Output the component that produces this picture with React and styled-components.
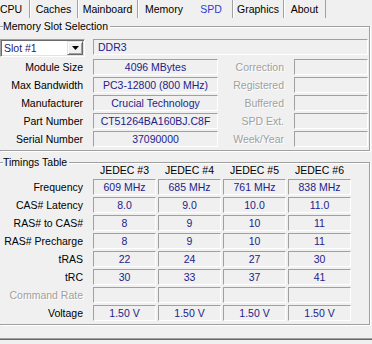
import React from 'react';
import styled, { createGlobalStyle } from 'styled-components';

const Global = createGlobalStyle`
  html, body { margin: 0; padding: 0; background: #f0f0f0; }
  body {
    font-family: "Liberation Sans", Arial, sans-serif;
    font-size: 10.5px;
    color: #000;
  }
  * { box-sizing: border-box; }
`;

const Window = styled.div`
  width: 372px;
  height: 344px;
  overflow: hidden;
  background: #f0f0f0;
`;

const TabBar = styled.div`
  display: flex;
  height: 18px;
  margin-left: -8px;
`;

const Tab = styled.div`
  width: ${(p) => p.$w}px;
  height: 18px;
  line-height: 18px;
  text-align: center;
  white-space: nowrap;
  color: ${(p) => (p.$active ? '#2a3bd6' : '#000')};
  border-left: ${(p) => (p.$active ? 'none' : '1px solid #a0a0a0')};
  box-shadow: ${(p) => (p.$active ? 'none' : 'inset 1px 0 #fff')};
  border-right: ${(p) => (p.$last ? '1px solid #a0a0a0' : 'none')};
`;

const Page = styled.div`
  height: 322px;
  padding-top: 8px;
  border-bottom: 1px solid #696969;
  box-shadow: inset 0 -1px #a0a0a0;
`;

const Group = styled.div`
  position: relative;
  width: 370px;
  margin-top: ${(p) => p.$mt || 0}px;
  padding: ${(p) => p.$pad};
  border: 1px solid #a0a0a0;
  border-left: none;
  box-shadow: inset 0 1px #fff, 1px 1px 0 #fff;
`;

const GroupTitle = styled.div`
  position: absolute;
  top: -7px;
  left: 3px;
  padding-right: 2px;
  line-height: 13px;
  background: #f0f0f0;
  white-space: nowrap;
`;

const SlotGrid = styled.div`
  display: grid;
  grid-template-columns: 93px 125px 76px 74px;
  grid-template-rows: 18px repeat(5, 16px);
  row-gap: 2px;
`;

const TimingGrid = styled.div`
  display: grid;
  grid-template-columns: 91px repeat(4, 63px);
  grid-template-rows: 13px repeat(8, 16px);
  column-gap: 2px;
  row-gap: 2px;
`;

const Label = styled.div`
  text-align: right;
  padding-right: ${(p) => p.$pr || 10}px;
  line-height: 16px;
  white-space: nowrap;
  color: ${(p) => (p.$disabled ? '#a0a0a0' : '#000')};
  text-shadow: ${(p) => (p.$disabled ? '1px 1px 0 #fff' : 'none')};
`;

const Head = styled.div`
  text-align: center;
  line-height: 13px;
  white-space: nowrap;
`;

const Field = styled.div`
  height: 16px;
  line-height: 14px;
  border: 1px solid;
  border-color: #a0a0a0 #fff #fff #a0a0a0;
  color: #22228a;
  white-space: nowrap;
  overflow: hidden;
  text-align: ${(p) => (p.$left ? 'left' : 'center')};
  padding-left: ${(p) => (p.$left ? 4 : 0)}px;
  grid-column: ${(p) => p.$span || 'auto'};
`;

const Combo = styled.div`
  width: 85px;
  height: 18px;
  display: flex;
  align-items: stretch;
  background: #fff;
  border: 1px solid;
  border-color: #a0a0a0 #fff #fff #a0a0a0;
  box-shadow: inset 1px 1px #696969, inset -1px -1px #e3e3e3;
  padding: 1px;
`;

const ComboText = styled.div`
  flex: 1;
  line-height: 14px;
  padding-left: 2px;
  color: #1a1a70;
`;

const ComboButton = styled.div`
  width: 16px;
  display: flex;
  align-items: center;
  justify-content: center;
  background: #f0f0f0;
  border: 1px solid;
  border-color: #e3e3e3 #696969 #696969 #e3e3e3;
  box-shadow: inset 1px 1px #fff, inset -1px -1px #a0a0a0;
`;

const tabs = [
  { t: 'CPU', w: 37 },
  { t: 'Caches', w: 48 },
  { t: 'Mainboard', w: 60 },
  { t: 'Memory', w: 53 },
  { t: 'SPD', w: 42, active: true },
  { t: 'Graphics', w: 51 },
  { t: 'About', w: 43, last: true },
];

const slotRows = [
  ['Module Size', '4096 MBytes', 'Correction'],
  ['Max Bandwidth', 'PC3-12800 (800 MHz)', 'Registered'],
  ['Manufacturer', 'Crucial Technology', 'Buffered'],
  ['Part Number', 'CT51264BA160BJ.C8F', 'SPD Ext.'],
  ['Serial Number', '37090000', 'Week/Year'],
];

const timingRows = [
  ['Frequency', ['609 MHz', '685 MHz', '761 MHz', '838 MHz']],
  ['CAS# Latency', ['8.0', '9.0', '10.0', '11.0']],
  ['RAS# to CAS#', ['8', '9', '10', '11']],
  ['RAS# Precharge', ['8', '9', '10', '11']],
  ['tRAS', ['22', '24', '27', '30']],
  ['tRC', ['30', '33', '37', '41']],
  ['Command Rate', ['', '', '', ''], true],
  ['Voltage', ['1.50 V', '1.50 V', '1.50 V', '1.50 V']],
];

export default function App() {
  return (
    <Window>
      <Global />
      <TabBar>
        {tabs.map((t) => (
          <Tab key={t.t} $w={t.w} $active={t.active} $last={t.last}>
            {t.t}
          </Tab>
        ))}
      </TabBar>
      <Page>
        <Group $pad="12px 1px 3px 0">
          <GroupTitle>Memory Slot Selection</GroupTitle>
          <SlotGrid>
            <div>
              <Combo>
                <ComboText>Slot #1</ComboText>
                <ComboButton>
                  <svg width="7" height="4" viewBox="0 0 7 4">
                    <polygon points="0,0 7,0 3.5,4" fill="#000" />
                  </svg>
                </ComboButton>
              </Combo>
            </div>
            <Field $left $span="2 / 5">DDR3</Field>
            {slotRows.map(([l, v, r]) => (
              <React.Fragment key={l}>
                <Label $pr={10}>{l}</Label>
                <Field>{v}</Field>
                <Label $pr={10} $disabled>{r}</Label>
                <Field />
              </React.Fragment>
            ))}
          </SlotGrid>
        </Group>
        <Group $mt={11} $pad="1px 1px 3px 0">
          <GroupTitle>Timings Table</GroupTitle>
          <TimingGrid>
            <div />
            <Head>JEDEC #3</Head>
            <Head>JEDEC #4</Head>
            <Head>JEDEC #5</Head>
            <Head>JEDEC #6</Head>
            {timingRows.map(([l, vals, dis]) => (
              <React.Fragment key={l}>
                <Label $pr={8} $disabled={dis}>{l}</Label>
                {vals.map((v, i) => (
                  <Field key={i}>{v}</Field>
                ))}
              </React.Fragment>
            ))}
          </TimingGrid>
        </Group>
      </Page>
    </Window>
  );
}
